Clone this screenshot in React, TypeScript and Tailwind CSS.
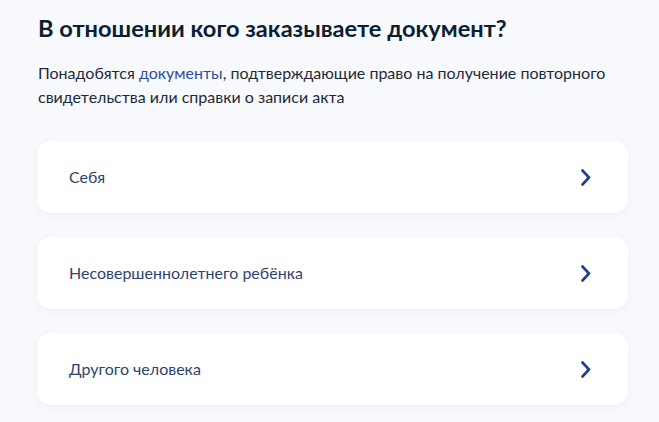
import React from "react";

const Chevron = () => (
  <svg width="12" height="17" viewBox="0 0 12 17" fill="none" aria-hidden="true">
    <path d="M2.5 1.5L9 8.5L2.5 15.5" stroke="#233d8c" strokeWidth="2.6" strokeLinecap="round" strokeLinejoin="round" />
  </svg>
);

const items = ["Себя", "Несовершеннолетнего ребёнка", "Другого человека"];

export default function App() {
  return (
    <div className="min-h-[422px] w-full bg-[#f7f9fc] pt-[12px]" style={{ fontFamily: "Lato, 'Noto Sans', sans-serif" }}>
      <div className="ml-[37px] w-[591px]">
        <h1 className="pl-[1px] text-[23.6px] font-bold leading-[32px] text-[#0b1f33]">
          В отношении кого заказываете документ?
        </h1>
        <p className="mt-[17px] pl-[1px] text-[16px] leading-[24px] text-[#1f2a38]">
          Понадобятся <span className="text-[#2d4e9c]">документы</span>, подтверждающие право на получение повторного свидетельства или справки о записи акта
        </p>
        <div className="mt-[32px] flex flex-col gap-[24px]">
          {items.map((t) => (
            <div
              key={t}
              className="flex h-[72px] items-center justify-between rounded-[14px] bg-white pl-[32px] pr-[36px] shadow-[0_2px_6px_rgba(150,170,200,0.12)]"
            >
              <span className="text-[16px] leading-[24px] text-[#2e4370]">{t}</span>
              <Chevron />
            </div>
          ))}
        </div>
      </div>
    </div>
  );
}
